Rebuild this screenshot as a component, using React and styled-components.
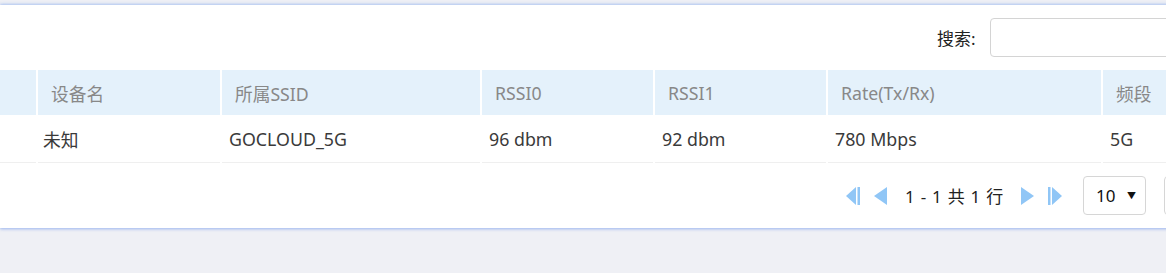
import React from "react";
import styled, { createGlobalStyle } from "styled-components";

const Global = createGlobalStyle`
  html, body { margin: 0; padding: 0; }
  body {
    background: #eff0f5;
    overflow: hidden;
    font-family: "Noto Sans", "Noto Sans CJK SC", sans-serif;
  }
`;

const Page = styled.div`
  width: 1166px;
  height: 273px;
  overflow: hidden;
  padding-top: 5px;
  box-sizing: border-box;
`;

const Card = styled.div`
  width: 1260px;
  background: #fff;
  box-shadow: 0 -1px 3px rgba(120, 160, 235, 0.45), 0 1px 3px rgba(110, 150, 235, 0.6);
`;

const Toolbar = styled.div`
  height: 65px;
  display: flex;
  align-items: center;
  padding-left: 937px;
  gap: 14px;
`;

const Label = styled.span`
  font-size: 17px;
  color: #222;
`;

const SearchInput = styled.div`
  width: 220px;
  height: 39px;
  border: 1px solid #d4d4d4;
  border-radius: 4px;
  box-sizing: border-box;
  margin-top: -1px;
`;

const Grid = styled.div`
  display: grid;
  grid-template-columns: 36px 182px 258px 171px 171px 273px 150px;
  column-gap: 2px;
`;

const HeadCell = styled.div`
  height: 45px;
  background: #e4f1fb;
  color: #888;
  font-size: 17.7px;
  display: flex;
  align-items: center;
  padding-left: 13px;
`;

const BodyCell = styled.div`
  height: 48px;
  border-bottom: 1px solid #efefef;
  color: #3a3a3a;
  font-size: 17.8px;
  display: flex;
  align-items: center;
  padding-left: ${(p) => p.$pad ?? 7}px;
  box-sizing: border-box;
  padding-top: 1px;
`;

const Pager = styled.div`
  height: 65px;
  display: flex;
  align-items: center;
  padding-left: 845px;
`;

const IconBtn = styled.span`
  display: inline-flex;
  align-items: center;
  margin-right: ${(p) => p.$mr}px;
`;

const PageText = styled.span`
  font-size: 17px;
  color: #222;
  margin-right: 16px;
  letter-spacing: 0.75px;
`;

const Select = styled.div`
  width: 63px;
  height: 39px;
  border: 1px solid #d6d6d6;
  border-radius: 4px;
  box-sizing: border-box;
  display: flex;
  align-items: center;
  justify-content: space-between;
  padding: 0 9px 0 12px;
  font-size: 17px;
  color: #111;
  margin-left: 20px;
`;

const Caret = styled.span`
  font-size: 9px;
  color: #111;
`;

const GoBox = styled(Select)`
  width: 60px;
  margin-left: 18px;
`;

const blue = "#90c6f6";

const First = () => (
  <svg width="16" height="20" viewBox="0 0 16 20">
    <polygon points="11,1 11,19 1,10" fill={blue} />
    <rect x="12.5" y="1" width="2.5" height="18" fill={blue} />
  </svg>
);
const Prev = () => (
  <svg width="15" height="20" viewBox="0 0 15 20">
    <polygon points="14,1 14,19 1,10" fill={blue} />
  </svg>
);
const Next = () => (
  <svg width="15" height="20" viewBox="0 0 15 20">
    <polygon points="1,1 1,19 14,10" fill={blue} />
  </svg>
);
const Last = () => (
  <svg width="16" height="20" viewBox="0 0 16 20">
    <rect x="1" y="1" width="2.5" height="18" fill={blue} />
    <polygon points="5,1 5,19 15,10" fill={blue} />
  </svg>
);

const headers = ["", "设备名", "所属SSID", "RSSI0", "RSSI1", "Rate(Tx/Rx)", "频段"];
const row = ["", "未知", "GOCLOUD_5G", "96 dbm", "92 dbm", "780 Mbps", "5G"];

export default function App() {
  return (
    <>
      <Global />
      <Page>
        <Card>
          <Toolbar>
            <Label>搜索:</Label>
            <SearchInput />
          </Toolbar>
          <Grid>
            {headers.map((h, i) => (
              <HeadCell key={i}>{h}</HeadCell>
            ))}
            {row.map((c, i) => (
              <BodyCell key={i} $pad={i === 1 ? 5 : 7}>{c}</BodyCell>
            ))}
          </Grid>
          <Pager>
            <IconBtn $mr={12}><First /></IconBtn>
            <IconBtn $mr={17}><Prev /></IconBtn>
            <PageText>1 - 1 共 1 行</PageText>
            <IconBtn $mr={12}><Next /></IconBtn>
            <IconBtn $mr={0}><Last /></IconBtn>
            <Select>
              10 <Caret>▼</Caret>
            </Select>
            <GoBox />
          </Pager>
        </Card>
      </Page>
    </>
  );
}
